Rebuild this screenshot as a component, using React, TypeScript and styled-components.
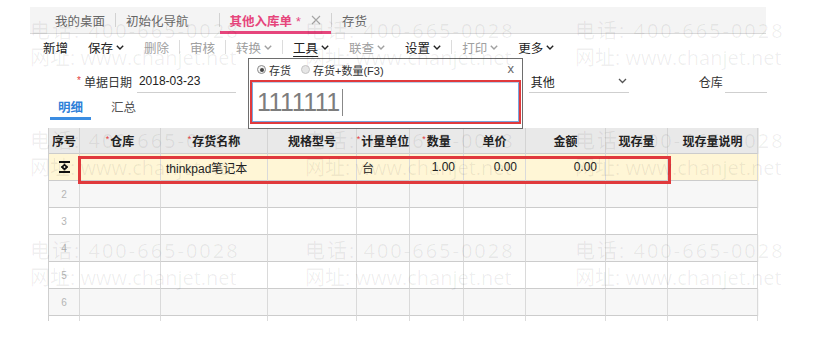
import React from "react";
import styled, { createGlobalStyle } from "styled-components";

const GlobalStyle = createGlobalStyle`
  html, body {
    margin: 0;
    padding: 0;
    background: #fff;
  }
  body {
    font-family: "Liberation Sans", "Noto Sans CJK SC", sans-serif;
    color: #333;
  }
`;

const cols = [31, 81, 107, 89, 53, 54, 62, 80, 62, 90];
const gridCols = cols.map((c) => `${c}px`).join(" ");

const Page = styled.div`
  position: relative;
  width: 813px;
  height: 343px;
  overflow: hidden;
  background: #fff;
`;

/* ---------- top tabs ---------- */
const TabBar = styled.div`
  display: flex;
  align-items: stretch;
  margin: 7px 0 0 30px;
  width: 736px;
  height: 27px;
  box-sizing: border-box;
  padding-left: 15px;
  background: #f4f4f4;
  border-bottom: 1px solid #d9d9d9;
  font-size: 12.5px;
`;

const Tab = styled.div<{ $active?: boolean }>`
  display: flex;
  align-items: center;
  gap: 10px;
  padding: 0 10px;
  margin-bottom: -1px;
  color: ${({ $active }) => ($active ? "#e6457c" : "#666")};
  font-weight: ${({ $active }) => ($active ? 700 : 400)};
  border-bottom: 3px solid ${({ $active }) => ($active ? "#e6457c" : "transparent")};
  padding-top: 2px;
`;

const TabStar = styled.span`
  font-weight: 400;
  margin-left: 4px;
`;

const TabClose = styled.svg<{ $show?: boolean }>`
  width: 10px;
  height: 10px;
  visibility: ${({ $show }) => ($show ? "visible" : "hidden")};
`;

const TabSep = styled.span`
  align-self: center;
  width: 1px;
  height: 14px;
  background: #d2d2d2;
`;

/* ---------- toolbar ---------- */
const Toolbar = styled.div`
  display: flex;
  align-items: center;
  height: 26px;
  padding-left: 33px;
  font-size: 12.5px;
`;

const ToolItem = styled.div<{ $muted?: boolean }>`
  display: flex;
  align-items: center;
  padding: 0 10px;
  color: ${({ $muted }) => ($muted ? "#a0a0a0" : "#222")};
`;

const ToolText = styled.span<{ $under?: boolean }>`
  text-decoration: ${({ $under }) => ($under ? "underline" : "none")};
  text-underline-offset: 3px;
`;

const Chevron = styled.svg`
  width: 8px;
  height: 5px;
  margin-left: 3px;
`;

const ToolSep = styled.span`
  width: 1px;
  height: 14px;
  background: #dcdcdc;
`;

/* ---------- form ---------- */
const FormRow = styled.div`
  display: flex;
  align-items: flex-end;
  height: 33px;
  padding-left: 77px;
  font-size: 12px;
`;

const Field = styled.div<{ $gap: number }>`
  display: flex;
  align-items: center;
  height: 23px;
  margin-left: ${({ $gap }) => $gap}px;
`;

const Star = styled.span`
  color: #e33b3b;
  font-size: 10px;
  margin-right: 3px;
  align-self: flex-start;
  margin-top: 5px;
`;

const Label = styled.span<{ $space: number }>`
  color: #333;
  margin-right: ${({ $space }) => $space}px;
`;

const Value = styled.div<{ $w: number }>`
  width: ${({ $w }) => $w}px;
  height: 23px;
  box-sizing: border-box;
  border-bottom: 1px solid #cfcfcf;
  display: flex;
  align-items: center;
  justify-content: space-between;
  padding-left: 2px;
  color: #222;
`;

/* ---------- sub tabs ---------- */
const SubTabs = styled.div`
  display: flex;
  gap: 12px;
  margin: 3px 0 0 50px;
`;

const SubTab = styled.div<{ $active?: boolean }>`
  height: 24px;
  box-sizing: border-box;
  display: flex;
  align-items: center;
  padding: 0 8px;
  font-size: 12.5px;
  color: ${({ $active }) => ($active ? "#2f80d8" : "#555")};
  font-weight: ${({ $active }) => ($active ? 700 : 400)};
  border-bottom: 3px solid ${({ $active }) => ($active ? "#3b8de2" : "transparent")};
`;

/* ---------- table ---------- */
const TableWrap = styled.div`
  position: relative;
  margin: 8px 0 0 48px;
  width: 710px;
  border-left: 1px solid #cfcfcf;
`;

const Row = styled.div<{ $bg: string; $h: number }>`
  display: grid;
  grid-template-columns: ${gridCols};
  height: ${({ $h }) => $h}px;
  background: ${({ $bg }) => $bg};
`;

const Cell = styled.div<{ $align?: "left" | "right" | "center"; $head?: boolean }>`
  display: flex;
  align-items: center;
  justify-content: ${({ $align }) =>
    $align === "right" ? "flex-end" : $align === "left" ? "flex-start" : "center"};
  padding: ${({ $align }) => ($align === "right" ? "0 8px 0 0" : $align === "left" ? "0 0 0 5px" : "0")};
  box-sizing: border-box;
  border-right: 1px solid ${({ $head }) => ($head ? "#d4d4d4" : "#dadada")};
  border-bottom: 1px solid #cccccc;
  font-size: 12px;
  font-weight: ${({ $head }) => ($head ? 700 : 400)};
  color: #222;
  white-space: nowrap;
`;

const HeadStar = styled.span`
  color: #e33b3b;
  font-size: 9px;
  font-weight: 400;
  align-self: flex-start;
  margin: 6px 1px 0 0;
`;

const RowNum = styled.span`
  font-size: 10px;
  color: #b5b5b5;
`;

const TailCell = styled.div`
  border-right: 1px solid #dcdcdc;
`;

const RowMark = styled.div`
  position: absolute;
  left: 29px;
  top: 28px;
  width: 593px;
  height: 28px;
  box-sizing: border-box;
  border: 3px solid #e0393c;
  pointer-events: none;
`;

/* ---------- popup ---------- */
const Popup = styled.div`
  position: absolute;
  left: 248px;
  top: 58px;
  width: 275px;
  height: 71px;
  box-sizing: border-box;
  background: #fff;
  border: 1px solid #6e6e6e;
  z-index: 5;
`;

const PopupHead = styled.div`
  display: flex;
  align-items: center;
  height: 21px;
  padding: 0 8px;
  font-size: 11px;
  color: #333;
`;

const Radio = styled.span<{ $checked?: boolean }>`
  display: inline-flex;
  align-items: center;
  justify-content: center;
  width: 9px;
  height: 9px;
  box-sizing: border-box;
  border-radius: 50%;
  border: 1px solid ${({ $checked }) => ($checked ? "#8a8a8a" : "#c4c4c4")};
  background: ${({ $checked }) => ($checked ? "#f2f2f2" : "#e6e6e6")};
  margin-right: 3px;
  &::after {
    content: "";
    display: ${({ $checked }) => ($checked ? "block" : "none")};
    width: 4px;
    height: 4px;
    border-radius: 50%;
    background: #444;
  }
`;

const RadioLabel = styled.span`
  margin-right: 10px;
`;

const PopupClose = styled.span`
  margin-left: auto;
  font-size: 13px;
  color: #666;
  margin-top: -2px;
`;

const SearchBox = styled.div`
  margin: 0 1px;
  height: 44px;
  box-sizing: border-box;
  border: 2px solid #e0393c;
`;

const SearchInner = styled.div`
  height: 100%;
  box-sizing: border-box;
  border: 1px solid #7aa6dc;
  border-top-color: #b9cde8;
  display: flex;
  align-items: center;
  padding-left: 4px;
  font-family: "Liberation Sans", sans-serif;
  font-size: 25px;
  letter-spacing: -0.5px;
  color: #7d7d7d;
`;

const Caret = styled.span`
  display: inline-block;
  width: 1px;
  height: 27px;
  margin-left: 2px;
  background: #888;
`;

/* ---------- watermark ---------- */
const Watermark = styled.div`
  position: absolute;
  left: 30px;
  top: 17px;
  display: grid;
  grid-template-columns: 275px 270px 270px;
  grid-auto-rows: 54px;
  row-gap: 56px;
  pointer-events: none;
  z-index: 10;
  font-family: "Open Sans", "Noto Sans CJK SC", sans-serif;
  font-size: 20px;
  color: rgba(0, 0, 0, 0.068);
  white-space: nowrap;
`;

const MarkLine = styled.div<{ $spacing: number }>`
  line-height: 27px;
  letter-spacing: ${({ $spacing }) => $spacing}px;
`;

const Down = () => (
  <Chevron viewBox="0 0 8 5">
    <path d="M0.8 0.8 L4 4 L7.2 0.8" fill="none" stroke="currentColor" strokeWidth="1.4" />
  </Chevron>
);

const RowIcon = () => (
  <svg width="11" height="12" viewBox="0 0 11 12">
    <rect x="0" y="0" width="11" height="2" fill="#111" />
    <rect x="0" y="10" width="11" height="2" fill="#111" />
    <circle cx="5.5" cy="6" r="2.6" fill="#111" />
    <rect x="2" y="5.2" width="7" height="1.6" fill="#111" />
    <rect x="4.7" y="2.6" width="1.6" height="6.8" fill="#111" />
    <circle cx="5.5" cy="6" r="0.9" fill="#fff6d6" />
  </svg>
);

const heads: { t: string; req?: boolean }[] = [
  { t: "序号" },
  { t: "仓库", req: true },
  { t: "存货名称", req: true },
  { t: "规格型号" },
  { t: "计量单位", req: true },
  { t: "数量", req: true },
  { t: "单价" },
  { t: "金额" },
  { t: "现存量" },
  { t: "现存量说明" },
];

const tools: { t: string; muted?: boolean; drop?: boolean; under?: boolean; sepAfter?: boolean }[] = [
  { t: "新增" },
  { t: "保存", drop: true },
  { t: "删除", muted: true, sepAfter: true },
  { t: "审核", muted: true, sepAfter: true },
  { t: "转换", muted: true, drop: true, sepAfter: true },
  { t: "工具", drop: true, under: true },
  { t: "联查", muted: true, drop: true },
  { t: "设置", drop: true, sepAfter: true },
  { t: "打印", muted: true, drop: true },
  { t: "更多", drop: true },
];

const App: React.FC = () => {
  return (
    <Page>
      <GlobalStyle />
      <TabBar>
        <Tab>我的桌面</Tab>
        <TabSep />
        <Tab>
          初始化导航
          <TabClose viewBox="0 0 10 10" />
        </Tab>
        <TabSep />
        <Tab $active>
          <span>
            其他入库单<TabStar>*</TabStar>
          </span>
          <TabClose $show viewBox="0 0 10 10">
            <path d="M1 1 L9 9 M9 1 L1 9" stroke="#a5a5a5" strokeWidth="1.1" />
          </TabClose>
        </Tab>
        <TabSep />
        <Tab>
          存货
          <TabClose viewBox="0 0 10 10" />
        </Tab>
      </TabBar>

      <Toolbar>
        {tools.map((it) => (
          <React.Fragment key={it.t}>
            <ToolItem $muted={it.muted}>
              <ToolText $under={it.under}>{it.t}</ToolText>
              {it.drop && <Down />}
            </ToolItem>
            {it.sepAfter && <ToolSep />}
          </React.Fragment>
        ))}
      </Toolbar>

      <FormRow>
        <Field $gap={0}>
          <Star>*</Star>
          <Label $space={5}>单据日期</Label>
          <Value $w={99}>2018-03-23</Value>
        </Field>
        <Field $gap={231}>
          <Star>*</Star>
          <Label $space={7}>入库类别</Label>
          <Value $w={100}>
            其他
            <svg width="9" height="6" viewBox="0 0 9 6" style={{ marginRight: 2 }}>
              <path d="M1 1 L4.5 4.5 L8 1" fill="none" stroke="#555" strokeWidth="1.3" />
            </svg>
          </Value>
        </Field>
        <Field $gap={70}>
          <Label $space={2}>仓库</Label>
          <Value $w={42} />
        </Field>
      </FormRow>

      <SubTabs>
        <SubTab $active>明细</SubTab>
        <SubTab>汇总</SubTab>
      </SubTabs>

      <TableWrap>
        <Row $bg="#e9e9e9" $h={26}>
          {heads.map((h) => (
            <Cell key={h.t} $head>
              {h.req && <HeadStar>*</HeadStar>}
              {h.t}
            </Cell>
          ))}
        </Row>
        <Row $bg="#fff6d6" $h={27}>
          <Cell>
            <RowIcon />
          </Cell>
          <Cell />
          <Cell $align="left">thinkpad笔记本</Cell>
          <Cell />
          <Cell $align="left">台</Cell>
          <Cell $align="right">1.00</Cell>
          <Cell $align="right">0.00</Cell>
          <Cell $align="right">0.00</Cell>
          <Cell />
          <Cell />
        </Row>
        {[2, 3, 4, 5, 6].map((n) => (
          <Row key={n} $bg={n % 2 === 0 ? "#f7f7f7" : "#ffffff"} $h={27}>
            <Cell>
              <RowNum>{n}</RowNum>
            </Cell>
            {cols.slice(1).map((_, i) => (
              <Cell key={i} />
            ))}
          </Row>
        ))}
        <Row $bg="transparent" $h={5}>
          {cols.map((_, i) => (
            <TailCell key={i} />
          ))}
        </Row>
        <RowMark />
      </TableWrap>

      <Popup>
        <PopupHead>
          <Radio $checked />
          <RadioLabel>存货</RadioLabel>
          <Radio />
          <RadioLabel>存货+数量(F3)</RadioLabel>
          <PopupClose>x</PopupClose>
        </PopupHead>
        <SearchBox>
          <SearchInner>
            1111111
            <Caret />
          </SearchInner>
        </SearchBox>
      </Popup>

      <Watermark>
        {Array.from({ length: 9 }).map((_, i) => (
          <div key={i}>
            <MarkLine $spacing={2}>电话: 400-665-0028</MarkLine>
            <MarkLine $spacing={0}>网址: www.chanjet.net</MarkLine>
          </div>
        ))}
      </Watermark>
    </Page>
  );
};

export default App;
